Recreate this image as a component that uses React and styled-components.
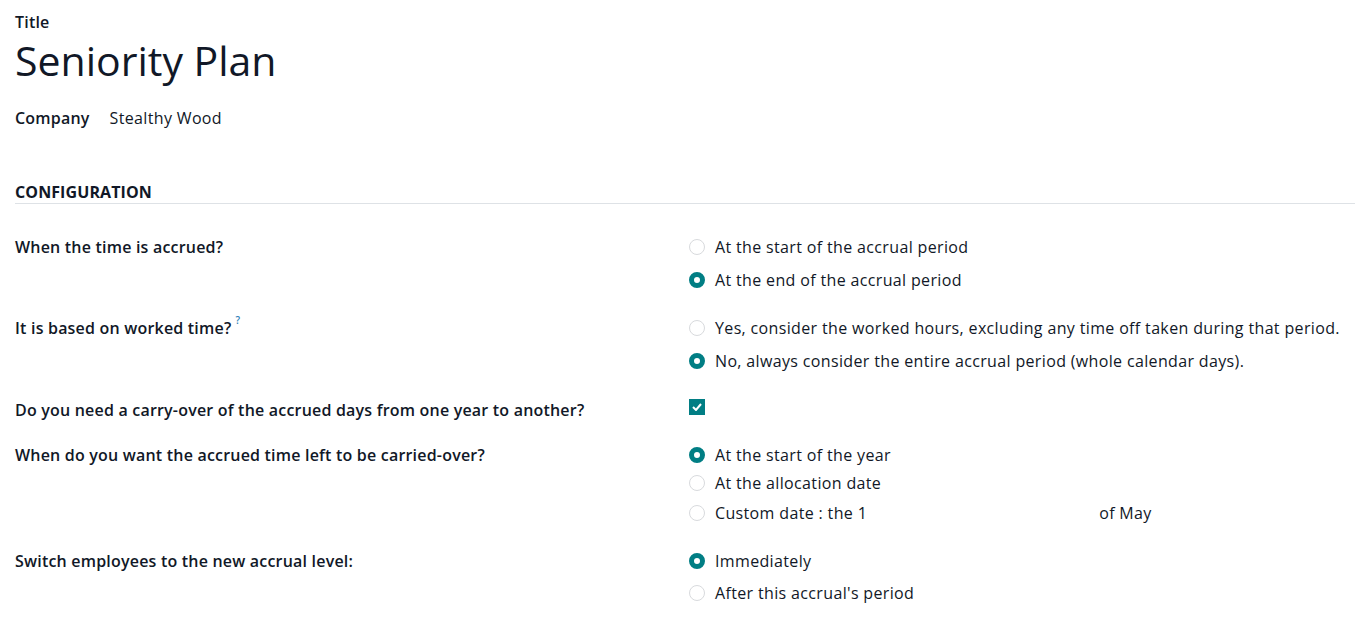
import React from "react";
import styled, { createGlobalStyle } from "styled-components";

const TEAL = "#017e84";

const GlobalStyle = createGlobalStyle`
  body {
    margin: 0;
    background: #fff;
    font-family: "Open Sans", "Noto Sans", sans-serif;
    color: #111827;
  }
`;

const Sheet = styled.div`
  padding: 11px 0 20px 15px;
  font-size: 16px;
  letter-spacing: 0.35px;
`;

const FieldLabel = styled.div`
  font-weight: 600;
  letter-spacing: 0.2px;
  line-height: 22px;
`;

const Title = styled.h1`
  margin: 0;
  font-size: 41px;
  font-weight: 400;
  letter-spacing: 0;
  line-height: 54px;
`;

const CompanyRow = styled.div`
  display: flex;
  gap: 20px;
  margin-top: 20px;
  line-height: 22px;
`;

const SectionHead = styled.div`
  margin-top: 52px;
  border-bottom: 1px solid #dee2e6;
  font-weight: 700;
  letter-spacing: 0.1px;
  line-height: 22px;
  text-transform: uppercase;
`;

const Grid = styled.div`
  display: grid;
  grid-template-columns: 674px 1fr;
  margin-top: 32px;
`;

const Label = styled.div`
  font-weight: 600;
  letter-spacing: 0.2px;
  line-height: 22px;
`;

const Help = styled.sup`
  position: relative;
  top: -2px;
  vertical-align: top;
  color: #2f7fb8;
  font-size: 10px;
  line-height: 10px;
  margin-left: 4px;
`;

const Options = styled.div`
  display: flex;
  flex-direction: column;
  gap: ${(p) => p.$gap}px;
  padding-bottom: ${(p) => p.$after}px;
`;

const Option = styled.label`
  display: flex;
  align-items: center;
  gap: 10px;
  line-height: 22px;
  white-space: nowrap;
  margin-top: ${(p) => p.$push || 0}px;
`;

const Radio = styled.span`
  box-sizing: border-box;
  width: 16px;
  height: 16px;
  border-radius: 50%;
  flex: none;
  background: #fff;
  border: ${(p) => (p.$on ? `5px solid ${TEAL}` : "1px solid #d8dadd")};
`;

const Check = styled.span`
  width: 16px;
  height: 16px;
  background: ${TEAL};
  display: flex;
  align-items: center;
  justify-content: center;
`;

const Blank = styled.span`
  display: inline-block;
  width: ${(p) => p.$w}px;
`;

const Choice = ({ on, push, children }) => (
  <Option $push={push}>
    <Radio $on={on} />
    <span>{children}</span>
  </Option>
);

export default function App() {
  return (
    <>
      <GlobalStyle />
      <Sheet>
        <FieldLabel>Title</FieldLabel>
        <Title>Seniority Plan</Title>
        <CompanyRow>
          <FieldLabel>Company</FieldLabel>
          <span>Stealthy Wood</span>
        </CompanyRow>
        <SectionHead>Configuration</SectionHead>

        <Grid>
          <Label>When the time is accrued?</Label>
          <Options $gap={11} $after={26}>
            <Choice>At the start of the accrual period</Choice>
            <Choice on>At the end of the accrual period</Choice>
          </Options>

          <Label>
            It is based on worked time?<Help>?</Help>
          </Label>
          <Options $gap={11} $after={27}>
            <Choice>Yes, consider the worked hours, excluding any time off taken during that period.</Choice>
            <Choice on>No, always consider the entire accrual period (whole calendar days).</Choice>
          </Options>

          <Label>Do you need a carry-over of the accrued days from one year to another?</Label>
          <Options $gap={0} $after={29}>
            <Check>
              <svg width="10" height="8" viewBox="0 0 10 8">
                <path d="M1 4 L4 7 L9 1" fill="none" stroke="#fff" strokeWidth="2" />
              </svg>
            </Check>
          </Options>

          <Label>When do you want the accrued time left to be carried-over?</Label>
          <Options $gap={6} $after={26}>
            <Choice on>At the start of the year</Choice>
            <Choice>At the allocation date</Choice>
            <Choice push={2}>
              Custom date : the 1<Blank $w={232} />of May
            </Choice>
          </Options>

          <Label>Switch employees to the new accrual level:</Label>
          <Options $gap={10} $after={0}>
            <Choice on>Immediately</Choice>
            <Choice>After this accrual's period</Choice>
          </Options>
        </Grid>
      </Sheet>
    </>
  );
}
